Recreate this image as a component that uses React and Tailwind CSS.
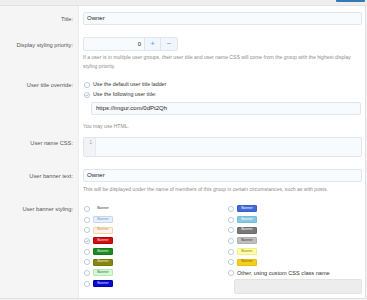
import React from 'react'

const Radio = ({ checked }) => (
    <svg width="6" height="6" viewBox="0 0 12 12" className="shrink-0">
        <circle cx="6" cy="6" r="5.2" fill="#fff" stroke="#93abc7" strokeWidth="1.2" />
        {checked && <path d="M3.4 6.2 L5.3 8.1 L8.7 4.2" fill="none" stroke="#7190b4" strokeWidth="1.3" />}
    </svg>
)

const Banner = ({ cls }) => (
    <span className={`w-[20px] h-[7px] flex items-center justify-center text-[3.6px] leading-none rounded-[1px] border ${cls}`}>
        Banner
    </span>
)

const leftBanners = [
    { cls: 'border-transparent text-[#333]' },
    { cls: 'bg-[#e6effa] border-[#c5d8ef] text-[#6e94c0]' },
    { cls: 'bg-[#fdf2e3] border-[#f0d5ad] text-[#c4925c]' },
    { cls: 'bg-[#cc1010] border-[#b80000] text-[#ffe0e0]', checked: true },
    { cls: 'bg-[#1f8a22] border-[#187a1b] text-[#e5f5e5]' },
    { cls: 'bg-[#868612] border-[#77770a] text-[#f3f3c8]' },
    { cls: 'bg-[#d3f8d3] border-[#b4e8b4] text-[#3a6b3a]' },
    { cls: 'bg-[#0a0ad0] border-[#0000b0] text-[#e0e0ff]' },
]

const rightBanners = [
    { cls: 'bg-[#3f6ad8] border-[#3a60c6] text-white' },
    { cls: 'bg-[#85c9e3] border-[#78bcd6] text-white' },
    { cls: 'bg-[#787878] border-[#6c6c6c] text-white' },
    { cls: 'bg-[#bfbfbf] border-[#b0b0b0] text-[#3c3c3c]' },
    { cls: 'bg-[#ffff9e] border-[#f0f08a] text-[#7a7a30]' },
    { cls: 'bg-[#f6cf1c] border-[#e9c010] text-[#8a5f00]' },
]

const Label = ({ children, pt }) => (
    <div className={`w-[79px] shrink-0 bg-[#f5f5f5] border-r border-[#ebebeb] text-right pr-[5px] text-[5.7px] leading-[10px] text-[#555] ${pt}`}>
        {children}
    </div>
)

export default function App() {
    return (
        <div className="w-[367px] h-[300px] overflow-hidden bg-[#f3f3f3] font-['Liberation_Sans',Arial,sans-serif]">
            {/* Header strip */}
            <div className="h-[6px] flex justify-end bg-[#eeeeee] border-b border-[#e2e2e2]">
                <div className="w-[29px] h-[2px] mr-[2px] bg-[#3479b5] rounded-b-[1px]" />
            </div>

            <div className="w-[366px] bg-white border-r border-b border-[#e0e0e0]">
                {/* Title */}
                <div className="flex">
                    <Label pt="pt-[8px]">Title:</Label>
                    <div className="flex-1 pl-[4px] pr-[3px] pt-[6px]">
                        <div className="h-[13px] flex items-center pl-[3px] bg-[#f8fbfe] border border-[#e1e5ea] rounded-[2px] text-[6px] text-[#1c1c1c]">
                            Owner
                        </div>
                    </div>
                </div>

                {/* Display styling priority */}
                <div className="flex">
                    <Label pt="pt-[14.5px]">Display styling priority:</Label>
                    <div className="flex-1 pl-[4px] pr-[3px] pt-[12px]">
                        <div className="w-[95px] h-[14px] flex bg-[#f8fbfe] border border-[#e1e5ea] rounded-[2px] text-[6px]">
                            <div className="w-[60px] flex items-center justify-end pr-[3px] text-[#1c1c1c]">0</div>
                            <div className="w-[16px] flex items-center justify-center border-l border-[#e1e5ea] bg-[#f1f6fc] text-[#4aa3e6] text-[8px]">+</div>
                            <div className="flex-1 flex items-center justify-center border-l border-[#e1e5ea] bg-[#f1f6fc] text-[#4aa3e6] text-[8px]">−</div>
                        </div>
                        <p className="mt-[2px] text-[5.1px] leading-[9px] text-[#8c8c8c]">
                            If a user is in multiple user groups, their user title and user name CSS will come from the group with the highest display styling priority.
                        </p>
                    </div>
                </div>

                {/* User title override */}
                <div className="flex">
                    <Label pt="pt-[9px]">User title override:</Label>
                    <div className="flex-1 pl-[4px] pr-[3px] pt-[9px] text-[5.3px] text-[#333]">
                        <div className="h-[10px] flex items-center gap-[3px] pl-[1px]">
                            <Radio />
                            <span>Use the default user title ladder</span>
                        </div>
                        <div className="h-[10px] flex items-center gap-[3px] pl-[1px]">
                            <Radio checked />
                            <span>Use the following user title:</span>
                        </div>
                        <div className="ml-[8px] mr-[1px] mt-[1.5px] h-[13.5px] flex items-center pl-[4px] bg-[#f8fbfe] border border-[#e1e5ea] rounded-[2px] text-[6px] text-[#1c1c1c]">
                            https://imgur.com/0dPt2Qh
                        </div>
                        <p className="mt-[7px] text-[5.1px] leading-[9px] text-[#8c8c8c]">You may use HTML.</p>
                    </div>
                </div>

                {/* User name CSS */}
                <div className="flex">
                    <Label pt="pt-[7px]">User name CSS:</Label>
                    <div className="flex-1 pl-[4px] pr-[3px] pt-[6px]">
                        <div className="h-[20px] flex bg-[#f8fbfe] border border-[#e1e5ea] rounded-[2px]">
                            <div className="w-[12px] bg-[#f1f3f6] border-r border-[#e6e9ed] text-right pr-[3px] pt-[2px] text-[4.5px] leading-[6px] text-[#a0a0a0]">1</div>
                        </div>
                    </div>
                </div>

                {/* User banner text */}
                <div className="flex">
                    <Label pt="pt-[13.5px]">User banner text:</Label>
                    <div className="flex-1 pl-[4px] pr-[3px] pt-[12px]">
                        <div className="h-[13px] flex items-center pl-[3px] bg-[#f8fbfe] border border-[#e1e5ea] rounded-[2px] text-[6px] text-[#1c1c1c]">
                            Owner
                        </div>
                        <p className="mt-[2.5px] text-[5.1px] leading-[9px] text-[#8c8c8c]">
                            This will be displayed under the name of members of this group in certain circumstances, such as with posts.
                        </p>
                    </div>
                </div>

                {/* User banner styling */}
                <div className="flex">
                    <Label pt="pt-[10.5px]">User banner styling:</Label>
                    <div className="flex-1 pl-[4px] pr-[3px] pt-[10px] pb-[4px] grid grid-cols-[144px_1fr]">
                        <div>
                            {leftBanners.map((b, i) => (
                                <div key={i} className="h-[10.7px] flex items-center gap-[3px] pl-[1px]">
                                    <Radio checked={b.checked} />
                                    <Banner cls={b.cls} />
                                </div>
                            ))}
                        </div>
                        <div>
                            {rightBanners.map((b, i) => (
                                <div key={i} className="h-[10.7px] flex items-center gap-[3px] pl-[1px]">
                                    <Radio />
                                    <Banner cls={b.cls} />
                                </div>
                            ))}
                            <div className="h-[10.7px] flex items-center gap-[3px] pl-[1px] text-[5.6px] text-[#333]">
                                <Radio />
                                <span>Other, using custom CSS class name</span>
                            </div>
                            <div className="ml-[7px] mt-[0.7px] h-[15px] bg-[#ededed] border border-[#e2e2e2] rounded-[2px]" />
                        </div>
                    </div>
                </div>
            </div>
        </div>
    )
}
